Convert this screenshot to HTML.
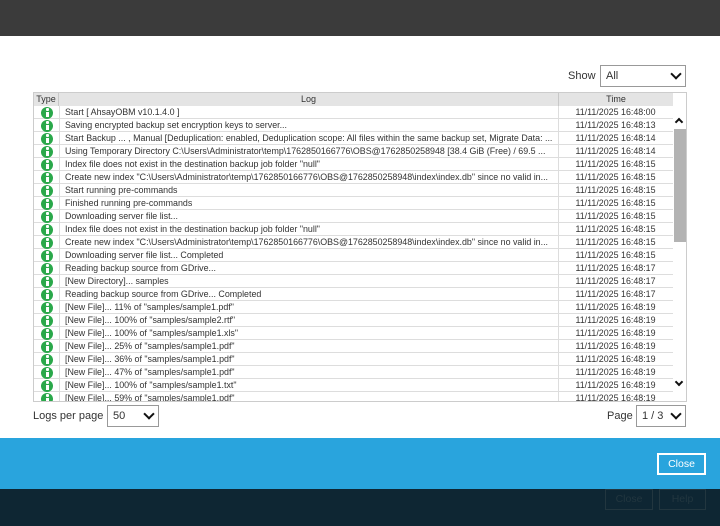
<!DOCTYPE html>
<html><head><meta charset="utf-8"><style>
*{margin:0;padding:0;box-sizing:border-box}
body{width:720px;height:526px;overflow:hidden;background:#fff;font-family:"Liberation Sans",sans-serif;color:#333;position:relative}
.top{position:absolute;left:0;top:0;width:720px;height:36px;background:#3b3b3b}
.blue{position:absolute;left:0;top:438px;width:720px;height:51px;background:#29a4dd}
.navy{position:absolute;left:0;top:489px;width:720px;height:37px;background:#0e2633}
.sel{position:absolute;border:1px solid #999;background:#fff;font-size:11px;color:#333;padding-left:5px}
.sel .ch{position:absolute;right:5px;top:50%;width:8px;height:8px;margin-top:-6px;border-right:2.5px solid #111;border-bottom:2.5px solid #111;transform:rotate(45deg)}
.lbl{position:absolute;font-size:11px;color:#333}
.tbl{position:absolute;left:33px;top:92px;width:654px;height:310px;border:1px solid #ccc;overflow:hidden}
.hd{position:absolute;left:0;top:0;height:13px;width:639px;background:#e4e4e4;font-size:9px}
.hd div{position:absolute;top:0;height:13px;line-height:13px;text-align:center;border-right:1px solid #c8c8c8}
.row{position:absolute;left:0;height:13px;width:639px;border-bottom:1px solid #ddd;font-size:8.9px;line-height:12px;white-space:nowrap}
.row .ic{position:absolute;left:7px;top:0.5px;width:12px;height:12px;border-radius:50%;background:#2aa84a}
.ic:before{content:"";position:absolute;left:4.5px;top:1.5px;width:3px;height:2.5px;background:#fff;border-radius:1px}
.ic:after{content:"";position:absolute;left:4.5px;top:5px;width:3px;height:5px;background:#fff}
.row .lg{position:absolute;left:25px;top:0;width:499px;height:13px;overflow:hidden;border-left:1px solid #ddd;padding-left:5px}
.row .tm{position:absolute;left:524px;top:0;width:114px;height:13px;text-align:center;border-left:1px solid #ddd}
.thumb{position:absolute;left:640px;top:36px;width:13px;height:113px;background:#b3b3b3}
.arr{position:absolute;width:6px;height:6px;border-left:2.5px solid #111;border-top:2.5px solid #111}
.btn{position:absolute;font-size:10.5px;text-align:center;line-height:18px}
</style></head><body>
<div class="top"></div>
<div class="lbl" style="left:568px;top:70px">Show</div>
<div class="sel" style="left:600px;top:65px;width:86px;height:22px;line-height:20px">All<span class="ch"></span></div>
<div class="tbl">
<div class="hd"><div style="left:0;width:25px">Type</div><div style="left:25px;width:500px">Log</div><div style="left:525px;width:114px;border:none">Time</div></div>
<div class="arr" style="left:642px;top:26px;transform:rotate(45deg)"></div>
<div class="thumb"></div>
<div class="arr" style="left:642px;top:286px;transform:rotate(225deg)"></div>
</div>
<div class="lbl" style="left:33px;top:410px">Logs per page</div>
<div class="sel" style="left:107px;top:405px;width:52px;height:22px;line-height:20px">50<span class="ch"></span></div>
<div class="lbl" style="left:607px;top:410px">Page</div>
<div class="sel" style="left:636px;top:405px;width:50px;height:22px;line-height:20px">1 / 3<span class="ch"></span></div>
<div class="blue"></div>
<div class="btn" style="left:657px;top:453px;width:49px;height:22px;border:2px solid #fff;color:#fff;line-height:18px">Close</div>
<div class="navy"></div>
<div class="btn" style="left:605px;top:489px;width:48px;height:21px;border:1px solid #22363f;color:#22363f">Close</div>
<div class="btn" style="left:659px;top:489px;width:47px;height:21px;border:1px solid #22363f;color:#22363f">Help</div>
<script>
var rows=[
["Start [ AhsayOBM v10.1.4.0 ]","16:48:00"],
["Saving encrypted backup set encryption keys to server...","16:48:13"],
["Start Backup ... , Manual [Deduplication: enabled, Deduplication scope: All files within the same backup set, Migrate Data: ...","16:48:14"],
["Using Temporary Directory C:\\Users\\Administrator\\temp\\1762850166776\\OBS@1762850258948 [38.4 GiB (Free) / 69.5 ...","16:48:14"],
["Index file does not exist in the destination backup job folder \"null\"","16:48:15"],
["Create new index \"C:\\Users\\Administrator\\temp\\1762850166776\\OBS@1762850258948\\index\\index.db\" since no valid in...","16:48:15"],
["Start running pre-commands","16:48:15"],
["Finished running pre-commands","16:48:15"],
["Downloading server file list...","16:48:15"],
["Index file does not exist in the destination backup job folder \"null\"","16:48:15"],
["Create new index \"C:\\Users\\Administrator\\temp\\1762850166776\\OBS@1762850258948\\index\\index.db\" since no valid in...","16:48:15"],
["Downloading server file list... Completed","16:48:15"],
["Reading backup source from GDrive...","16:48:17"],
["[New Directory]... samples","16:48:17"],
["Reading backup source from GDrive... Completed","16:48:17"],
["[New File]... 11% of \"samples/sample1.pdf\"","16:48:19"],
["[New File]... 100% of \"samples/sample2.rtf\"","16:48:19"],
["[New File]... 100% of \"samples/sample1.xls\"","16:48:19"],
["[New File]... 25% of \"samples/sample1.pdf\"","16:48:19"],
["[New File]... 36% of \"samples/sample1.pdf\"","16:48:19"],
["[New File]... 47% of \"samples/sample1.pdf\"","16:48:19"],
["[New File]... 100% of \"samples/sample1.txt\"","16:48:19"],
["[New File]... 59% of \"samples/sample1.pdf\"","16:48:19"]];
var t=document.querySelector('.tbl'),h='';
rows.forEach(function(r,i){h+='<div class="row" style="top:'+(13+i*13)+'px"><span class="ic"></span><span class="lg">'+r[0].replace(/&/g,'&amp;').replace(/</g,'&lt;')+'</span><span class="tm">11/11/2025 '+r[1]+'</span></div>';});
t.insertAdjacentHTML('afterbegin',h);
</script>
</body></html>
